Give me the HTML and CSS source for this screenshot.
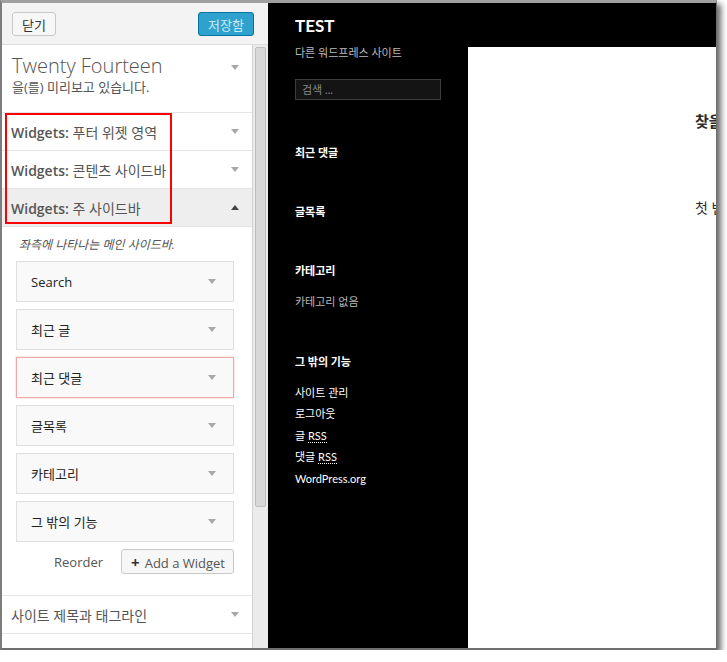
FILE: index.html
```html
<!DOCTYPE html>
<html lang="ko">
  <head>
    <meta charset="UTF-8" />
    <title>Customize: Twenty Fourteen</title>
    <link rel="stylesheet" href="styles.css">
  </head>
  <body>
    <div class="window">
      <div class="customizer">
        <div class="cz-header">
          <button class="btn">닫기</button>
          <button class="btn btn-primary">저장함</button>
        </div>
        <div class="cz-body">
          <div class="cz-content">
            <div class="theme-info">
              <div>
                <div class="theme-name">Twenty Fourteen</div>
                <div class="theme-sub">을(를) 미리보고 있습니다.</div>
              </div>
              <span class="arrow"></span>
            </div>

            <div class="section">
              <div class="section-title"><span><b>Widgets:</b> 푸터 위젯 영역</span><span class="arrow"></span></div>
            </div>
            <div class="section">
              <div class="section-title"><span><b>Widgets:</b> 콘텐츠 사이드바</span><span class="arrow"></span></div>
            </div>
            <div class="section open">
              <div class="section-title"><span><b>Widgets:</b> 주 사이드바</span><span class="arrow up"></span></div>
              <div class="section-body">
                <p class="description">좌측에 나타나는 메인 사이드바.</p>
                <div class="widget-item"><span>Search</span><span class="arrow"></span></div>
                <div class="widget-item"><span>최근 글</span><span class="arrow"></span></div>
                <div class="widget-item highlight"><span>최근 댓글</span><span class="arrow"></span></div>
                <div class="widget-item"><span>글목록</span><span class="arrow"></span></div>
                <div class="widget-item"><span>카테고리</span><span class="arrow"></span></div>
                <div class="widget-item"><span>그 밖의 기능</span><span class="arrow"></span></div>
                <div class="widget-actions">
                  <span class="reorder">Reorder</span>
                  <button class="btn add-widget"><span class="plus">+</span>Add a Widget</button>
                </div>
              </div>
            </div>
            <div class="section last">
              <div class="section-title"><span>사이트 제목과 태그라인</span><span class="arrow"></span></div>
            </div>
          </div>
          <div class="scrollbar"><div class="thumb"></div></div>
        </div>
      </div>

      <div class="preview">
        <div class="site-sidebar">
          <div class="site-title">TEST</div>
          <div class="site-desc">다른 워드프레스 사이트</div>
          <div class="site-search">검색 ...</div>
          <div class="site-widget"><h3>최근 댓글</h3></div>
          <div class="site-widget"><h3>글목록</h3></div>
          <div class="site-widget">
            <h3>카테고리</h3>
            <ul class="muted"><li>카테고리 없음</li></ul>
          </div>
          <div class="site-widget">
            <h3>그 밖의 기능</h3>
            <ul>
              <li>사이트 관리</li>
              <li>로그아웃</li>
              <li>글 <abbr>RSS</abbr></li>
              <li>댓글 <abbr>RSS</abbr></li>
              <li>WordPress.org</li>
            </ul>
          </div>
        </div>
        <div class="site-main">
          <h1>찾을 수 없습니다</h1>
          <p>첫 번째 글을 발행할 준비가 되었나요?</p>
        </div>
      </div>

      <div class="annotation"></div>
    </div>
  </body>
</html>
```

FILE: styles.css
```css
body {
  margin: 0;
  background: #fff;
  font-family: "Open Sans", "Noto Sans CJK KR", sans-serif;
}
.window {
  position: relative;
  display: flex;
  width: 714px;
  height: 645px;
  border-left: 2px solid #7d7d7d;
  border-top: 3px solid #a0a0a0;
  border-right: 1px solid #6f6f6f;
  border-bottom: 2px solid #6f6f6f;
  box-shadow: 4px 4px 6px rgba(0, 0, 0, 0.6);
}
.customizer {
  width: 266px;
  display: flex;
  flex-direction: column;
  background: #fff;
}
.cz-header {
  height: 41px;
  display: flex;
  justify-content: space-between;
  align-items: flex-start;
  padding: 0 14px 0 10px;
  background: #f3f3f3;
  border-bottom: 1px solid #dcdcdc;
}
.btn {
  margin-top: 9px;
  height: 24px;
  padding: 0 9px;
  font-family: "Open Sans", "Noto Sans CJK KR", sans-serif;
  font-size: 13px;
  color: #333;
  background: #f7f7f7;
  border: 1px solid #c8c8c8;
  border-radius: 3px;
}
.btn-primary {
  padding: 0 9px;
  background: #2ea2cc;
  border-color: #0074a2;
  color: #cfe8f3;
}
.cz-body {
  flex: 1;
  display: flex;
  min-height: 0;
}
.cz-content {
  width: 250px;
  overflow: hidden;
  color: #555;
}
.scrollbar {
  width: 15px;
  background: #ebebeb;
  border-left: 1px solid #d2d2d2;
  padding-top: 2px;
}
.thumb {
  width: 9px;
  height: 458px;
  margin-left: 2px;
  background: #d8d8d8;
  border: 1px solid #bdbdbd;
  border-radius: 2px;
}
.arrow {
  width: 0;
  height: 0;
  border-left: 4px solid transparent;
  border-right: 4px solid transparent;
  border-top: 5px solid #a8a8a8;
}
.arrow.up {
  border-top: 0;
  border-bottom: 5px solid #444;
}
.theme-info {
  display: flex;
  justify-content: space-between;
  padding: 10px 13px 17px 10px;
}
.theme-info .arrow {
  margin-top: 10px;
}
.theme-name {
  font-size: 20px;
  font-weight: 300;
  line-height: 22px;
  color: #555;
}
.theme-sub {
  margin-top: 2px;
  font-size: 13px;
  line-height: 16px;
}
.section {
  border-top: 1px solid #e5e5e5;
}
.section.last {
  border-bottom: 1px solid #e5e5e5;
}
.section-title {
  height: 37px;
  display: flex;
  justify-content: space-between;
  align-items: center;
  padding: 0 13px 0 9px;
  font-size: 14px;
}
.section-title b {
  font-weight: 600;
}
.section.open .section-title {
  background: #eee;
}
.section-body {
  padding: 0 18px 21px 14px;
  border-top: 1px solid #e2e2e2;
}
.description {
  margin: 0;
  padding: 9px 0 7px 3px;
  font-size: 12px;
  line-height: 18px;
  font-style: italic;
}
.widget-item {
  height: 39px;
  margin-bottom: 7px;
  display: flex;
  justify-content: space-between;
  align-items: center;
  padding: 0 17px 0 14px;
  background: #f9f9f9;
  border: 1px solid #dfdfdf;
  font-size: 13px;
  color: #222;
}
.widget-item.highlight {
  border-color: #efa9a9;
  box-shadow: 0 0 2px rgba(220, 80, 80, 0.35);
}
.widget-actions {
  display: flex;
  justify-content: flex-end;
  align-items: center;
  gap: 18px;
}
.reorder {
  font-size: 13px;
  color: #555;
}
.add-widget {
  margin-top: 0;
  height: 25px;
  padding: 0 8px 0 9px;
  color: #555;
}
.plus {
  font-weight: 700;
  font-size: 15px;
  color: #333;
  margin-right: 5px;
}
.preview {
  flex: 1;
  display: flex;
  background: #000;
  font-family: Lato, "Noto Sans CJK KR", sans-serif;
  overflow: hidden;
}
.site-sidebar {
  width: 173px;
  padding: 11px 0 0 27px;
  color: #fff;
}
.site-title {
  font-size: 17px;
  font-weight: 700;
  line-height: 24px;
}
.site-desc {
  margin-top: 6px;
  font-size: 11px;
  line-height: 18px;
  color: #bbb;
}
.site-search {
  width: 138px;
  height: 19px;
  margin: 17px 0 43px;
  padding-left: 6px;
  background: #141414;
  border: 1px solid #3d3d3d;
  font-size: 11px;
  line-height: 19px;
  color: #8a8a8a;
}
.site-widget {
  margin-bottom: 39px;
}
.site-widget h3 {
  margin: 0;
  font-size: 11px;
  line-height: 20px;
  font-weight: 700;
}
.site-widget ul {
  list-style: none;
  margin: 10px 0 0;
  padding: 0;
  font-size: 11px;
  line-height: 21.5px;
}
.site-widget ul.muted {
  color: #bbb;
}
abbr {
  text-decoration: none;
  border-bottom: 1px dotted #fff;
}
.site-main {
  flex: 1;
  margin-top: 44px;
  padding-left: 227px;
  background: #fff;
  color: #2b2b2b;
  white-space: nowrap;
  overflow: hidden;
}
.site-main h1 {
  margin: 64px 0 0;
  font-size: 15px;
  line-height: 20px;
  font-weight: 700;
}
.site-main p {
  margin: 67px 0 0;
  font-size: 14px;
  line-height: 20px;
}
.annotation {
  position: absolute;
  left: 3px;
  top: 110px;
  width: 163px;
  height: 107px;
  border: 2px solid #f00;
}
```
